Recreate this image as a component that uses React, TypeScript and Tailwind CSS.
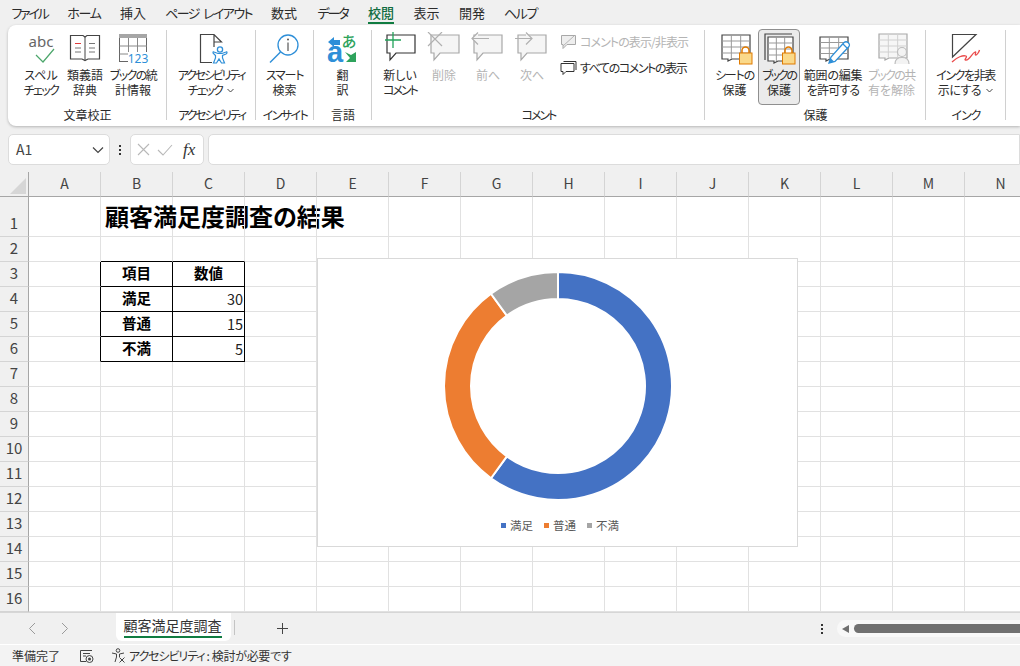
import type { ReactNode } from 'react';

const menu = [
  { label: 'ファイル', cls: 'w-[37px] tracking-[-2.2px]' },
  { label: 'ホーム', cls: 'w-[33px] tracking-[-1.3px]' },
  { label: '挿入', cls: 'w-[26px]' },
  { label: 'ページ レイアウト', cls: 'w-[86px] tracking-[-1.6px] [word-spacing:3px]' },
  { label: '数式', cls: 'w-[26px]' },
  { label: 'データ', cls: 'w-[32px] tracking-[-2px]' },
  { label: '校閲', cls: 'w-[26px]' },
  { label: '表示', cls: 'w-[26px]' },
  { label: '開発', cls: 'w-[26px]' },
  { label: 'ヘルプ', cls: 'w-[32px] tracking-[-1.3px]' },
];

// the reference's UI font has much narrower kana than Noto
const tight: Record<string, string> = {
  'アクセシビリティ': 'tracking-[-2.2px]',
  'チェック': 'tracking-[-1.6px]',
  'スマート': 'tracking-[-1.2px]',
  'コメント': 'tracking-[-2px]',
  'シートの': 'tracking-[-1.2px]',
  'ブックの': 'tracking-[-2.2px]',
  '範囲の編集': 'tracking-[-0.2px]',
  'を許可する': 'tracking-[-0.8px]',
  'ブックの共': 'tracking-[-1.6px]',
  'インクを非表': 'tracking-[-1.4px]',
  '示にする': 'tracking-[-0.5px]',
  'ブックの統': 'tracking-[-1.6px]',
  'インサイト': 'tracking-[-1.6px]',
  'インク': 'tracking-[-1px]',
};

function Ico({ children }: { children: ReactNode }) {
  return (
    <svg width="36" height="36" viewBox="0 0 36 36" fill="none" className="shrink-0">
      {children}
    </svg>
  );
}

function SheetGrid({ x, y, w, h, stroke = '#444', fill = '#fff', inner = '#999' }: { x: number; y: number; w: number; h: number; stroke?: string; fill?: string; inner?: string }) {
  const cw = w / 3;
  const rh = h / 4;
  return (
    <g>
      <path d={`M${x} ${y}H${x + w}V${y + h}H${x + 10}L${x + 6} ${y + h + 2}V${y + h}H${x}Z`} fill={fill} stroke={stroke} strokeWidth="1.2" />
      <path d={`M${x + cw} ${y}V${y + h}M${x + 2 * cw} ${y}V${y + h}M${x} ${y + rh}H${x + w}M${x} ${y + 2 * rh}H${x + w}M${x} ${y + 3 * rh}H${x + w}`} stroke={inner} strokeWidth="1" />
    </g>
  );
}

function Lock({ x, y }: { x: number; y: number }) {
  return (
    <g>
      <path d={`M${x + 3} ${y + 7}V${y + 4.5}a3.5 3.5 0 0 1 7 0V${y + 7}`} stroke="#e07b00" strokeWidth="1.5" />
      <rect x={x + 0.5} y={y + 7} width="12.500" height="11" fill="#fad98a" stroke="#e07b00" />
    </g>
  );
}

function Bubble({ stroke = '#333', fill = '#fff', x = 5, y = 3 }: { stroke?: string; fill?: string; x?: number; y?: number }) {
  return (
    <path d={`M${x} ${y}H${x + 28}V${y + 18}H${x + 9}L${x + 3} ${y + 25}V${y + 18}H${x}Z`} fill={fill} stroke={stroke} strokeWidth="1.2" />
  );
}

const icons: Record<string, ReactNode> = {
  spell: (
    <Ico>
      <text x="18" y="15" textAnchor="middle" fontSize="15" fill="#666" fontFamily="'Noto Sans', sans-serif">abc</text>
      <path d="M13 23l7 7 11-13" stroke="#4ca66b" strokeWidth="1.2" />
    </Ico>
  ),
  book: (
    <Ico>
      <path d="M3.500 3.500H16l2 1.500 2-1.500H32.500V27H21l-3 1.500L15 27H3.500Z" fill="#fff" stroke="#444" strokeWidth="1.2" />
      <path d="M18 5V28" stroke="#444" />
      <path d="M8 11.500H14" stroke="#e03c3c" />
      <path d="M8 16H14M8 20H14M22 11.500H28M22 16H28M22 20H28" stroke="#777" />
    </Ico>
  ),
  stats: (
    <Ico>
      <rect x="4.500" y="2.500" width="27" height="27" fill="#fff" stroke="#666" />
      <rect x="4" y="2" width="28" height="4" fill="#a6a6a6" />
      <path d="M13.500 6V30M22.500 6V22M4.500 14H32M4.500 22H14" stroke="#888" />
      <rect x="13" y="20" width="20" height="11" fill="#fff" />
      <text x="23" y="31" textAnchor="middle" fontSize="12" fill="#2e8fd8" fontFamily="'Noto Sans', sans-serif">123</text>
    </Ico>
  ),
  a11y: (
    <Ico>
      <path d="M21 15V10H28.500L21 2.500H7.500V30.500H19M21 2.500V10" fill="#fff" stroke="#444" strokeWidth="1.2" />
      <circle cx="27" cy="17.500" r="2.600" stroke="#2e8fd8" strokeWidth="1.3" fill="#fff" />
      <path d="M20 20.500Q20 19.500 21 20l4 1.500h4l4-1.500q1-.5 1 .5t-1 1.500l-3.500 1.500v2.500l2 5h-3l-2.500-4-2.500 4h-3l2-5v-2.500L21 22q-1-.5-1-1.500Z" stroke="#2e8fd8" strokeWidth="1.200" fill="#fff" />
    </Ico>
  ),
  search: (
    <Ico>
      <circle cx="21" cy="13" r="10" stroke="#2e8fd8" strokeWidth="1.3" fill="#fff" />
      <path d="M13.500 20L3 30.500" stroke="#2e8fd8" strokeWidth="1.400" />
      <circle cx="21" cy="7.500" r="1" fill="#555" />
      <path d="M21 10.500V19" stroke="#555" strokeWidth="1.2" />
    </Ico>
  ),
  // taller box than the others so the kana's line box is not clipped at the top
  translate: (
    <svg width="36" height="40" viewBox="0 -4 36 40" fill="none" className="shrink-0 -mt-[4px]">
      <path d="M3 10L9 5V8H15V13H9V15Z" fill="#2e8fd8" />
      <text x="10" y="30" textAnchor="middle" fontSize="29" fontWeight="700" fill="#2e8fd8" fontFamily="'Liberation Sans', sans-serif">a</text>
      <text x="24" y="15" textAnchor="middle" fontSize="15" fontWeight="500" fill="#2ea35c" fontFamily="'Noto Sans CJK JP', sans-serif">あ</text>
      <path d="M20 20L26 23L31 20V30H21L25 26Z" fill="#2ea35c" />
    </svg>
  ),
  newComment: (
    <Ico>
      <Bubble />
      <path d="M11 0V16M3 8H19" stroke="#22a35a" strokeWidth="1.3" />
    </Ico>
  ),
  delComment: (
    <Ico>
      <Bubble stroke="#a8a8a8" fill="#f5f5f5" />
      <path d="M2 0L16 14M16 0L2 14" stroke="#b0b0b0" strokeWidth="1.2" />
    </Ico>
  ),
  prevComment: (
    <Ico>
      <Bubble x={4} stroke="#a8a8a8" fill="#f5f5f5" />
      <path d="M2 6.500H19M8 0.500L2 6.500L8 12.500" stroke="#b0b0b0" strokeWidth="1.2" fill="#f5f5f5" />
    </Ico>
  ),
  nextComment: (
    <Ico>
      <Bubble x={4} stroke="#a8a8a8" fill="#f5f5f5" />
      <path d="M1 6.500H18M12 0.500L18 6.500L12 12.500" stroke="#b0b0b0" strokeWidth="1.2" fill="#f5f5f5" />
    </Ico>
  ),
  sheetLock: (
    <Ico>
      <SheetGrid x={5} y={3} w={28} h={24} />
      <Lock x={22} y={14} />
    </Ico>
  ),
  bookLock: (
    <Ico>
      <path d="M4 28V2H31" stroke="#444" strokeWidth="1.2" />
      <SheetGrid x={7} y={5} w={25} h={24} />
      <Lock x={21} y={14} />
    </Ico>
  ),
  rangeEdit: (
    <Ico>
      <SheetGrid x={5} y={5} w={28} h={22} />
      <path d="M14 31L16 25L29 10.500Q31 9 33 10.500L34 11.500Q35 13 34 14.500L20 29.500Z" fill="#fff" stroke="#2e8fd8" strokeWidth="1.3" />
      <path d="M14 31L15.500 26L19 29.500Z" fill="#2e8fd8" />
      <path d="M28 12L32.500 16.500" stroke="#2e8fd8" strokeWidth="1.2" />
    </Ico>
  ),
  unshare: (
    <Ico>
      <SheetGrid x={5} y={2} w={28} h={24} stroke="#a8a8a8" inner="#d0d0d0" fill="#f6f6f6" />
      <circle cx="28" cy="20" r="4.500" fill="#f3f3f3" stroke="#bdbdbd" strokeWidth="1.2" />
      <path d="M21 32Q21 25.500 28 25.500T35 32" fill="#f3f3f3" stroke="#bdbdbd" strokeWidth="1.2" />
    </Ico>
  ),
  ink: (
    <Ico>
      <path d="M4.500 2.500H28L4.500 25Z" fill="#fff" stroke="#444" strokeWidth="1.2" />
      <path d="M4 30C9 25 15 23 18 24C20 25 15 28 18 28C22 28 24 21 27 20C29 19 26 23 28 23C29 23 31 20 31.500 18" stroke="#ea4b4b" strokeWidth="1.300" />
    </Ico>
  ),
};

function Chevron() {
  return (
    <svg width="7" height="5" viewBox="0 0 7 5" fill="none" className="inline-block ml-[5px] mb-[2px]">
      <path d="M.5 1L3.500 4L6.500 1" stroke="#444" />
    </svg>
  );
}

function RibbonBtn({ icon, lines, w, disabled, active, chevron }: { icon: string; lines: string[]; w: string; disabled?: boolean; active?: boolean; chevron?: boolean }) {
  return (
    <div className={`${w} h-[76px] flex flex-col items-center rounded-[4px] ${active ? 'pt-[2px] bg-[#ebebeb] border border-[#8f8f8f]' : 'pt-[3px]'}`}>
      {icons[icon]}
      <div className={`-mt-[1px] text-center text-[12px] leading-[15px] whitespace-nowrap ${disabled ? 'text-[#b4b4b4]' : 'text-[#2b2b2b]'}`}>
        {lines.map((l, i) => (
          <div key={l} className={tight[l] ?? ''}>
            {l}
            {chevron && i === lines.length - 1 && <Chevron />}
          </div>
        ))}
      </div>
    </div>
  );
}

function Group({ label, w, pl, children }: { label: string; w: string; pl?: string; children: ReactNode }) {
  return (
    <div className={`${w} shrink-0 relative h-full`}>
      <div className={`flex pt-[4px] ${pl ?? ''}`}>{children}</div>
      <div className={`absolute left-0 right-0 top-[82px] text-center text-[12px] leading-[15px] text-[#2b2b2b] ${tight[label] ?? ''}`}>{label}</div>
      <div className="absolute right-0 top-[5px] h-[90px] w-px bg-[#d0d0d0]" />
    </div>
  );
}

const columns = ['A', 'B', 'C', 'D', 'E', 'F', 'G', 'H', 'I', 'J', 'K', 'L', 'M', 'N'];
const rows = Array.from({ length: 16 }, (_, i) => i + 1);

const tableData: Record<string, { text: string; kind: 'head' | 'num' }> = {
  B3: { text: '項目', kind: 'head' },
  C3: { text: '数値', kind: 'head' },
  B4: { text: '満足', kind: 'head' },
  C4: { text: '30', kind: 'num' },
  B5: { text: '普通', kind: 'head' },
  C5: { text: '15', kind: 'num' },
  B6: { text: '不満', kind: 'head' },
  C6: { text: '5', kind: 'num' },
};

function cellBorder(col: string, row: number) {
  const inTable = (col === 'B' || col === 'C') && row >= 3 && row <= 6;
  const rightBlack = inTable || (col === 'A' && row >= 3 && row <= 6);
  const bottomBlack = inTable || ((col === 'B' || col === 'C') && row === 2);
  return `${rightBlack ? 'border-r-black' : 'border-r-[#e1e1e1]'} ${bottomBlack ? 'border-b-black' : 'border-b-[#e1e1e1]'}`;
}

function polar(a: number, r: number) {
  const rad = (a * Math.PI) / 180;
  return [115 + r * Math.sin(rad), 115 - r * Math.cos(rad)];
}

function slice(from: number, to: number) {
  const R = 114;
  const r = 87;
  const [x1, y1] = polar(from, R);
  const [x2, y2] = polar(to, R);
  const [x3, y3] = polar(to, r);
  const [x4, y4] = polar(from, r);
  const large = to - from > 180 ? 1 : 0;
  return `M${x1} ${y1}A${R} ${R} 0 ${large} 1 ${x2} ${y2}L${x3} ${y3}A${r} ${r} 0 ${large} 0 ${x4} ${y4}Z`;
}

const chartData = [
  { label: '満足', from: 0, to: 216, color: '#4472c4', box: 'bg-[#4472c4]' },
  { label: '普通', from: 216, to: 324, color: '#ed7d31', box: 'bg-[#ed7d31]' },
  { label: '不満', from: 324, to: 360, color: '#a5a5a5', box: 'bg-[#a5a5a5]' },
];

function Chart() {
  return (
    <div className="absolute left-[317px] top-[86px] w-[481px] h-[289px] bg-white border border-[#d9d9d9] flex flex-col items-center pt-[12px]">
      <svg width="230" height="230" viewBox="0 0 230 230">
        {chartData.map((s) => (
          <path key={s.label} d={slice(s.from, s.to)} fill={s.color} stroke="#fff" strokeWidth="2" />
        ))}
      </svg>
      <div className="mt-[16px] ml-[5px] flex items-center gap-[11px] text-[11.500px] leading-[16px] text-[#595959]">
        {chartData.map((s) => (
          <div key={s.label} className="flex items-center gap-[4px]">
            <span className={`w-[5px] h-[5px] ${s.box}`} />
            {s.label}
          </div>
        ))}
      </div>
    </div>
  );
}

function Sheet() {
  return (
    <div className="relative h-[440px] overflow-hidden grid grid-cols-[29px_repeat(14,72px)] grid-rows-[25px_40px_repeat(15,25px)] bg-white">
      <div className="bg-[#f0f0f0] border-r border-b border-[#a6a6a6] flex items-end justify-end pr-[2px] pb-[2px]">
        <div className="w-0 h-0 border-l-[16px] border-l-transparent border-b-[16px] border-b-[#d6d6d6]" />
      </div>
      {columns.map((c) => (
        <div key={c} className="bg-[#f0f0f0] border-r border-r-[#d4d4d4] border-b border-b-[#a6a6a6] flex items-center justify-center pb-[1px] text-[14px] text-[#444]">
          {c}
        </div>
      ))}
      {rows.map((r) => (
        <div key={r} className="contents">
          <div className={`bg-[#f0f0f0] border-r border-r-[#a6a6a6] border-b border-b-[#d4d4d4] flex justify-center text-[15px] text-[#444] ${r === 1 ? 'items-end pb-[2px]' : 'items-center pb-[1px]'}`}>
            {r}
          </div>
          {columns.map((c) => {
            const d = tableData[`${c}${r}`];
            return (
              <div key={c} className={`relative border-r border-b ${cellBorder(c, r)} flex items-center text-[14.500px] ${d?.kind === 'head' ? 'justify-center pb-[2px] font-bold text-black' : 'justify-end pr-[1px] pb-[1px] text-[#222]'}`}>
                {d?.text}
                {c === 'B' && r === 1 && (
                  <span className="absolute left-[4px] top-[5px] whitespace-nowrap text-[24px] leading-[28px] font-bold text-black">顧客満足度調査の結果</span>
                )}
              </div>
            );
          })}
        </div>
      ))}
      <Chart />
    </div>
  );
}

export default function App() {
  return (
    <div className="w-[1020px] h-[666px] overflow-hidden bg-[#f0f0f0] [font-family:'Noto_Sans_CJK_JP','Noto_Sans',sans-serif] [font-feature-settings:'palt'] text-[#2b2b2b]">
      <div className="h-[25px] flex items-center pl-[11px] gap-[19.500px] text-[13px]">
        {menu.map((m) => (
          <div key={m.label} className={`${m.cls} relative h-[25px] flex items-center justify-center whitespace-nowrap ${m.label === '校閲' ? 'font-medium text-[#106c3f]' : ''}`}>
            {m.label}
            {m.label === '校閲' && <span className="absolute left-0 right-0 bottom-[1px] h-[2px] bg-[#107c41]" />}
          </div>
        ))}
      </div>

      <div className="ml-[8px] h-[101px] bg-white rounded-l-[8px] shadow-[0_1px_3px_rgba(0,0,0,0.25)] flex text-[12px]">
        <Group label="文章校正" w="w-[159px]" pl="pl-[11px]">
          <RibbonBtn icon="spell" lines={['スペル', 'チェック']} w="w-[44px]" />
          <RibbonBtn icon="book" lines={['類義語', '辞典']} w="w-[44px]" />
          <RibbonBtn icon="stats" lines={['ブックの統', '計情報']} w="w-[52px]" />
        </Group>
        <Group label="アクセシビリティ" w="w-[89px]">
          <RibbonBtn icon="a11y" lines={['アクセシビリティ', 'チェック']} w="w-[88px]" chevron />
        </Group>
        <Group label="インサイト" w="w-[58px]">
          <RibbonBtn icon="search" lines={['スマート', '検索']} w="w-[57px]" />
        </Group>
        <Group label="言語" w="w-[58px]">
          <RibbonBtn icon="translate" lines={['翻', '訳']} w="w-[57px]" />
        </Group>
        <Group label="コメント" w="w-[333px]" pl="pl-[6px]">
          <RibbonBtn icon="newComment" lines={['新しい', 'コメント']} w="w-[44px]" />
          <RibbonBtn icon="delComment" lines={['削除']} w="w-[44px]" disabled />
          <RibbonBtn icon="prevComment" lines={['前へ']} w="w-[44px]" disabled />
          <RibbonBtn icon="nextComment" lines={['次へ']} w="w-[44px]" disabled />
          <div className="ml-[6px] flex flex-col gap-[6px] pt-[3px] whitespace-nowrap">
            <div className="h-[20px] flex items-center gap-[3px] text-[#b4b4b4] tracking-[-0.9px]">
              <svg width="17" height="16" viewBox="0 0 17 16" fill="none">
                <path d="M1.500 1.500H15.500V10.500H7L3 14.500V10.500H1.500Z" fill="#eee" stroke="#a8a8a8" />
                <path d="M3 12L14 2" stroke="#b5b5b5" />
              </svg>
              コメントの表示/非表示
            </div>
            <div className="h-[20px] flex items-center gap-[3px] tracking-[-1.4px]">
              <svg width="17" height="16" viewBox="0 0 17 16" fill="none">
                <path d="M3.500 1.500H16V10" stroke="#333" />
                <path d="M1 3.500H14V11.500H6L3 14.500V11.500H1Z" fill="#fff" stroke="#333" />
              </svg>
              すべてのコメントの表示
            </div>
          </div>
        </Group>
        <Group label="保護" w="w-[221px]" pl="pl-[6px]">
          <RibbonBtn icon="sheetLock" lines={['シートの', '保護']} w="w-[47px]" />
          <RibbonBtn icon="bookLock" lines={['ブックの', '保護']} w="w-[42px]" active />
          <div className="w-[4px]" />
          <RibbonBtn icon="rangeEdit" lines={['範囲の編集', 'を許可する']} w="w-[58px]" />
          <div className="w-[6px]" />
          <RibbonBtn icon="unshare" lines={['ブックの共', '有を解除']} w="w-[47px]" disabled />
        </Group>
        <Group label="インク" w="w-[80px]">
          <RibbonBtn icon="ink" lines={['インクを非表', '示にする']} w="w-[79px]" chevron />
        </Group>
      </div>

      <div className="mt-[8px] ml-[8px] h-[31px] flex items-center">
        <div className="w-[102px] h-[31px] bg-white border border-[#dcdcdc] rounded-[5px] flex items-center justify-between pl-[7px] pr-[5px] text-[14px] text-[#444]">
          A1
          <svg width="12" height="8" viewBox="0 0 12 8" fill="none">
            <path d="M1 1.500L6 6.500L11 1.500" stroke="#444" strokeWidth="1.200" />
          </svg>
        </div>
        <div className="w-[20px] flex flex-col items-center gap-[2px]">
          <span className="w-[2px] h-[2px] bg-[#333]" />
          <span className="w-[2px] h-[2px] bg-[#333]" />
          <span className="w-[2px] h-[2px] bg-[#333]" />
        </div>
        <div className="w-[74px] h-[31px] bg-white border border-[#dcdcdc] rounded-[5px] flex items-center pl-[6px] gap-[7px]">
          <svg width="13" height="13" viewBox="0 0 13 13" fill="none">
            <path d="M1 1L12 12M12 1L1 12" stroke="#b8b8b8" strokeWidth="1.100" />
          </svg>
          <svg width="16" height="13" viewBox="0 0 16 13" fill="none">
            <path d="M1 7L6 12L15 2" stroke="#b8b8b8" strokeWidth="1.100" />
          </svg>
          <span className="ml-[3px] [font-family:'Liberation_Serif',serif] italic text-[17px] leading-[20px] text-[#333]">fx</span>
        </div>
        <div className="ml-[4px] flex-1 h-[31px] bg-white border border-[#dcdcdc] rounded-l-[5px]" />
      </div>

      <div className="mt-[7px]">
        <Sheet />
      </div>

      <div className="h-[32px] flex items-start border-t border-[#d6d6d6] relative">
        <svg width="8" height="13" viewBox="0 0 8 13" fill="none" className="ml-[28px] mt-[9px]">
          <path d="M7 1L1.500 6.500L7 12" stroke="#9a9a9a" />
        </svg>
        <svg width="8" height="13" viewBox="0 0 8 13" fill="none" className="ml-[25px] mt-[9px]">
          <path d="M1 1L6.500 6.500L1 12" stroke="#9a9a9a" />
        </svg>
        <div className="ml-[47px] w-[115px] h-[28px] bg-white rounded-b-[6px] relative flex justify-center pt-[2px] pr-[2px] text-[14px] leading-[20px] text-[#333]">
          顧客満足度調査
          <span className="absolute left-[8px] right-[9px] bottom-[3px] h-[2px] bg-[#107c41]" />
        </div>
        <div className="ml-[3px] mt-[7px] w-px h-[15px] bg-[#c4c4c4]" />
        <svg width="13" height="13" viewBox="0 0 13 13" fill="none" className="ml-[41px] mt-[9px]">
          <path d="M6.500 1V12M1 6.500H12" stroke="#444" />
        </svg>
        <div className="ml-[532px] mt-[11px] flex flex-col gap-[2px]">
          <span className="w-[2px] h-[2px] bg-[#333]" />
          <span className="w-[2px] h-[2px] bg-[#333]" />
          <span className="w-[2px] h-[2px] bg-[#333]" />
        </div>
        <div className="ml-[14px] mt-[7px] flex-1 h-[17px] bg-[#f8f8f8] rounded-l-full flex items-center pl-[5px]">
          <div className="w-0 h-0 border-y-[4px] border-y-transparent border-r-[7px] border-r-[#6f6f6f]" />
          <div className="ml-[5px] flex-1 h-[9px] bg-[#707070] rounded-l-full" />
        </div>
      </div>

      <div className="h-[22px] bg-[#f3f3f3] border-t border-white flex items-center pl-[12px] text-[12px] text-[#333]">
        準備完了
        <svg width="15" height="14" viewBox="0 0 15 14" fill="none" className="ml-[19px]">
          <path d="M1.500 1.500H13M1.500 1.500V12.500H7M4 4.500H11M4 7H7" stroke="#444" />
          <circle cx="10.500" cy="10" r="3.500" stroke="#444" />
          <circle cx="10.500" cy="10" r="1.500" fill="#444" />
        </svg>
        <svg width="15" height="15" viewBox="0 0 15 15" fill="none" className="ml-[17px]">
          <circle cx="7" cy="2.500" r="1.800" stroke="#444" />
          <path d="M1 5L5.500 6V9L4 14M13 5L8.500 6V9" stroke="#444" />
          <path d="M8.500 9.500L13.500 14.500M13.500 9.500L8.500 14.500" stroke="#444" />
        </svg>
        <span className="ml-[3px] tracking-[-1.1px]">アクセシビリティ</span>
        <span className="ml-[2px] tracking-[-0.3px]">: 検討が必要です</span>
      </div>
    </div>
  );
}
